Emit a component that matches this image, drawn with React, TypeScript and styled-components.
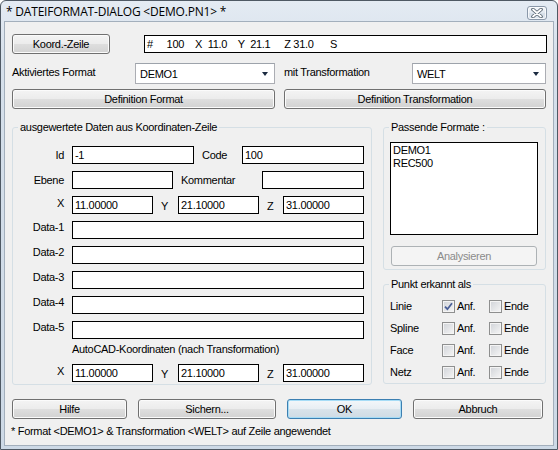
import React from "react"
import styled, { createGlobalStyle, css } from "styled-components"

const GlobalStyle = createGlobalStyle`
  html, body {
    margin: 0;
    padding: 0;
    background: #ffffff;
  }
  body {
    font-family: "Liberation Sans", Arial, sans-serif;
  }
  * {
    box-sizing: border-box;
  }
`

const Window = styled.div`
  width: 558px;
  height: 450px;
  display: flex;
  flex-direction: column;
  border: 1px solid #4f5964;
  border-radius: 6px 6px 0 0;
  background: linear-gradient(#e4ebf3, #d6e0eb 60px, #cdd9e6);
  overflow: hidden;
`

const TitleBar = styled.div`
  height: 20px;
  flex: none;
  display: flex;
  align-items: center;
  justify-content: space-between;
  padding: 1px 10px 0 5px;
`

const Title = styled.span`
  font-family: "Open Sans", "Liberation Sans", sans-serif;
  font-size: 12px;
  letter-spacing: -0.2px;
  color: #000;
`

const CloseButton = styled.div`
  width: 20px;
  height: 14px;
  margin-top: 3px;
  display: flex;
  align-items: center;
  justify-content: center;
  border: 1px solid #8a98a9;
  border-radius: 3px;
  background: linear-gradient(#f3f6fa, #e2e9f1 50%, #d6dfe9 51%, #dfe7f0);
  box-shadow: inset 0 0 0 1px rgba(255, 255, 255, 0.7);
`

const Body = styled.div`
  flex: 1;
  margin: 0 3px 3px;
  display: flex;
  flex-direction: column;
  padding: 12px 6px 0 7px;
  background: #f0f0f0;
  border: 1px solid #a3afbc;
  font-size: 11px;
  letter-spacing: -0.3px;
  color: #000;
`

const TopRow = styled.div`
  display: flex;
  align-items: center;
  height: 20px;
  gap: 34px;
`

const FormatRow = styled.div`
  display: grid;
  grid-template-columns: 123px 140px 137px 134px;
  height: 21px;
  margin-top: 9px;
`

const DefinitionRow = styled.div`
  display: grid;
  grid-template-columns: 263px 262px;
  gap: 9px;
  margin-top: 5px;
`

const Main = styled.div`
  display: flex;
  align-items: flex-start;
  gap: 11px;
  margin-top: 11px;
`

const SideColumn = styled.div`
  width: 163px;
  display: flex;
  flex-direction: column;
  gap: 7px;
`

const ButtonRow = styled.div`
  display: flex;
  gap: 11px;
  margin-top: 14px;
`

const Footer = styled.div`
  margin: 6px 0 0 -1px;
  line-height: 13px;
`

const Button = styled.button<{ $w?: number; $default?: boolean }>`
  width: ${p => (p.$w ? `${p.$w}px` : "100%")};
  height: 20px;
  padding: 0;
  font: inherit;
  letter-spacing: inherit;
  color: #000;
  border: 1px solid #707070;
  border-radius: 3px;
  background: linear-gradient(#f4f4f4 0%, #ececec 48%, #dedede 52%, #d2d2d2 100%);
  box-shadow: inset 0 0 0 1px #fbfbfb;
  ${p =>
    p.$default &&
    css`
      border-color: #3c7fb1;
      box-shadow: inset 0 0 0 1px #a6dcf6;
      background: linear-gradient(#f3f7fa 0%, #e8eef3 48%, #d9e3ea 52%, #cfdbe4 100%);
    `}
  &:disabled {
    color: #8b8b8b;
    border-color: #adb2b5;
    background: #f4f4f4;
    box-shadow: none;
  }
`

const TextBox = styled.div<{ $w?: number }>`
  width: ${p => (p.$w ? `${p.$w}px` : "auto")};
  flex: ${p => (p.$w ? "none" : 1)};
  height: 18px;
  border: 1px solid #000;
  background: #fff;
  padding: 1px 1px 0 2px;
  line-height: 14px;
  white-space: pre;
  overflow: hidden;
`

const Label = styled.div<{ $pad?: number }>`
  padding-top: ${p => p.$pad ?? 3}px;
  line-height: 13px;
  white-space: nowrap;
`

const Combo = styled.div`
  height: 21px;
  display: flex;
  align-items: center;
  justify-content: space-between;
  padding: 1px 6px 0 4px;
  border: 1px solid #abadb3;
  border-top-color: #9da3ab;
  background: #fff;
`

const ComboArrow = styled.span`
  width: 0;
  height: 0;
  border-left: 3.5px solid transparent;
  border-right: 3.5px solid transparent;
  border-top: 4px solid #1a2a40;
`

const Group = styled.fieldset<{ $w: number }>`
  width: ${p => p.$w}px;
  margin: 0;
  min-width: 0;
  padding: 0;
  border: 1px solid #d5dfe5;
  border-radius: 3px;
`

const Legend = styled.legend`
  margin-left: 5px;
  padding: 0 2px;
  line-height: 14px;
`

const FieldStack = styled.div`
  display: flex;
  flex-direction: column;
  gap: 7px;
  padding: 12px 0 2px 0;
`

const FieldRow = styled.div`
  display: flex;
  height: 18px;
`

const Cell = styled.div<{ $w: number; $align?: "left" | "right"; $top?: number }>`
  width: ${p => p.$w}px;
  flex: none;
  text-align: ${p => p.$align ?? "left"};
  padding: ${p => p.$top ?? 2}px ${p => (p.$align === "right" ? 8 : 0)}px 0
    ${p => (p.$align === "right" ? 0 : 8)}px;
  line-height: 13px;
  white-space: nowrap;
`

const SubLabel = styled.div`
  margin: -3px 0 1px 59px;
  line-height: 13px;
`

const ListBox = styled.div`
  width: 148px;
  height: 93px;
  margin: 8px 0 0 6px;
  padding: 1px 2px;
  border: 1px solid #000;
  background: #fff;
  line-height: 13px;
`

const SideButton = styled.div`
  width: 146px;
  margin: 11px 0 3px 7px;
`

const CheckGrid = styled.div`
  display: grid;
  grid-template-columns: 52px 47px 1fr;
  grid-auto-rows: 22px;
  align-items: center;
  padding: 4px 0 0 6px;
`

const CheckItem = styled.label`
  display: flex;
  align-items: center;
  gap: 2px;
`

const Box = styled.span`
  width: 13px;
  height: 13px;
  flex: none;
  display: flex;
  align-items: center;
  justify-content: center;
  border: 1px solid #8e8f8f;
  background: linear-gradient(135deg, #d0d3d8, #f6f6f6);
  box-shadow: inset 0 0 0 1px #f4f4f4;
`

const CheckBox = ({ checked, label }: { checked?: boolean; label: string }) => (
  <CheckItem>
    <Box>
      {checked && (
        <svg width="9" height="9" viewBox="0 0 9 9">
          <path d="M1 4.6 L3.4 7.2 L8 1.2" fill="none" stroke="#4a5f97" strokeWidth="1.8" />
        </svg>
      )}
    </Box>
    {label}
  </CheckItem>
)

const pointRows = [
  { name: "Linie", start: true },
  { name: "Spline", start: false },
  { name: "Face", start: false },
  { name: "Netz", start: false },
]

const dataRows = ["Data-1", "Data-2", "Data-3", "Data-4", "Data-5"]

const XyzRow = ({ label }: { label: string }) => (
  <FieldRow>
    <Cell $w={59} $align="right" $top={1}>
      {label}
    </Cell>
    <TextBox $w={81}>11.00000</TextBox>
    <Cell $w={25} $top={4}>Y</Cell>
    <TextBox $w={81}>21.10000</TextBox>
    <Cell $w={24} $top={4}>Z</Cell>
    <TextBox $w={81}>31.00000</TextBox>
  </FieldRow>
)

export default function App() {
  return (
    <>
      <GlobalStyle />
      <Window>
        <TitleBar>
          <Title>* DATEIFORMAT-DIALOG &lt;DEMO.PN1&gt; *</Title>
          <CloseButton>
            <svg width="12" height="10" viewBox="0 0 12 10">
              <path d="M2 1.5 L10 8.5 M10 1.5 L2 8.5" stroke="#56636f" strokeWidth="3.6" strokeLinecap="round" />
              <path d="M2 1.5 L10 8.5 M10 1.5 L2 8.5" stroke="#ffffff" strokeWidth="1.8" strokeLinecap="round" />
            </svg>
          </CloseButton>
        </TitleBar>
        <Body>
          <TopRow>
            <Button $w={98}>Koord.-Zeile</Button>
            <TextBox>{"#     100    X  11.0    Y  21.1     Z 31.0      S"}</TextBox>
          </TopRow>

          <FormatRow>
            <Label>Aktiviertes Format</Label>
            <Combo>
              DEMO1
              <ComboArrow />
            </Combo>
            <Label style={{ paddingLeft: 9 }}>mit Transformation</Label>
            <Combo>
              WELT
              <ComboArrow />
            </Combo>
          </FormatRow>

          <DefinitionRow>
            <Button>Definition Format</Button>
            <Button>Definition Transformation</Button>
          </DefinitionRow>

          <Main>
            <Group $w={360}>
              <Legend>ausgewertete Daten aus Koordinaten-Zeile</Legend>
              <FieldStack>
                <FieldRow>
                  <Cell $w={59} $align="right" $top={3}>Id</Cell>
                  <TextBox $w={122}>-1</TextBox>
                  <Cell $w={48} $top={3}>Code</Cell>
                  <TextBox $w={122}>100</TextBox>
                </FieldRow>
                <FieldRow>
                  <Cell $w={59} $align="right" $top={3}>Ebene</Cell>
                  <TextBox $w={101} />
                  <Cell $w={89} $top={3}>Kommentar</Cell>
                  <TextBox $w={102} />
                </FieldRow>
                <XyzRow label="X" />
                {dataRows.map(d => (
                  <FieldRow key={d}>
                    <Cell $w={59} $align="right" $top={0}>{d}</Cell>
                    <TextBox $w={292} />
                  </FieldRow>
                ))}
                <SubLabel>AutoCAD-Koordinaten (nach Transformation)</SubLabel>
                <XyzRow label="X" />
              </FieldStack>
            </Group>

            <SideColumn>
              <Group $w={163}>
                <Legend>Passende Formate :</Legend>
                <ListBox>
                  <div>DEMO1</div>
                  <div>REC500</div>
                </ListBox>
                <SideButton>
                  <Button disabled>Analysieren</Button>
                </SideButton>
              </Group>
              <Group $w={163}>
                <Legend>Punkt erkannt als</Legend>
                <CheckGrid>
                  {pointRows.map(r => (
                    <React.Fragment key={r.name}>
                      <span>{r.name}</span>
                      <CheckBox checked={r.start} label="Anf." />
                      <CheckBox label="Ende" />
                    </React.Fragment>
                  ))}
                </CheckGrid>
              </Group>
            </SideColumn>
          </Main>

          <ButtonRow>
            <Button $w={115}>Hilfe</Button>
            <Button $w={138}>Sichern...</Button>
            <Button $w={115} $default>OK</Button>
            <Button $w={130}>Abbruch</Button>
          </ButtonRow>

          <Footer>* Format &lt;DEMO1&gt; &amp; Transformation &lt;WELT&gt; auf Zeile angewendet</Footer>
        </Body>
      </Window>
    </>
  )
}
